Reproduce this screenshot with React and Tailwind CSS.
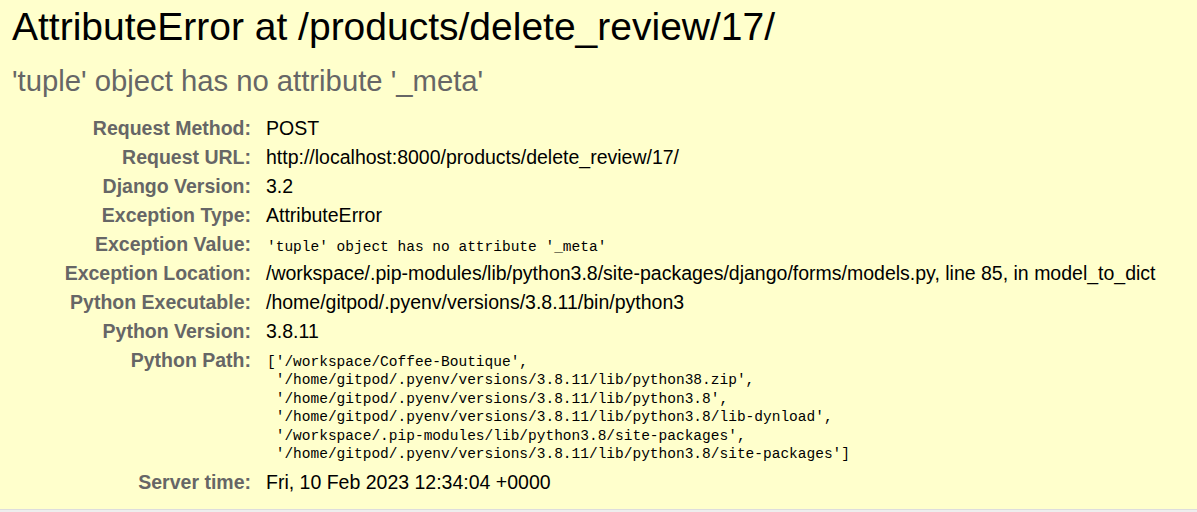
import React from 'react';

const rows = [
  { label: 'Request Method:', value: 'POST' },
  { label: 'Request URL:', value: 'http://localhost:8000/products/delete_review/17/' },
  { label: 'Django Version:', value: '3.2' },
  { label: 'Exception Type:', value: 'AttributeError' },
  { label: 'Exception Value:', value: "'tuple' object has no attribute '_meta'", mono: true },
  {
    label: 'Exception Location:',
    value: '/workspace/.pip-modules/lib/python3.8/site-packages/django/forms/models.py, line 85, in model_to_dict',
  },
  { label: 'Python Executable:', value: '/home/gitpod/.pyenv/versions/3.8.11/bin/python3' },
  { label: 'Python Version:', value: '3.8.11' },
];

const pythonPath = [
  "['/workspace/Coffee-Boutique',",
  " '/home/gitpod/.pyenv/versions/3.8.11/lib/python38.zip',",
  " '/home/gitpod/.pyenv/versions/3.8.11/lib/python3.8',",
  " '/home/gitpod/.pyenv/versions/3.8.11/lib/python3.8/lib-dynload',",
  " '/workspace/.pip-modules/lib/python3.8/site-packages',",
  " '/home/gitpod/.pyenv/versions/3.8.11/lib/python3.8/site-packages']",
];

const sans = 'font-["Liberation_Sans",Arial,sans-serif]';
const mono = 'font-["Liberation_Mono","DejaVu_Sans_Mono",monospace]';

function Row({ label, children, tall }) {
  return (
    <div className={`flex ${tall ? '' : 'h-[29px]'} items-start`}>
      <div className="w-[239px] shrink-0 pt-[3px] text-right text-[19.5px] leading-[22px] font-bold text-[#666]">
        {label}
      </div>
      <div className="pl-[15px] pt-[3px] text-[19.5px] leading-[22px] text-black">{children}</div>
    </div>
  );
}

export default function App() {
  return (
    <div className={`min-h-[512px] bg-[#eee] ${sans}`}>
      {/* Summary */}
      <div className="h-[510px] bg-[#ffc] border-b border-[#ddd] pl-[12px] pt-[4px]">
        <h1 className="text-[39px] leading-[45px] font-normal text-black">
          AttributeError at /products/delete_review/17/
        </h1>
        <h2 className="mt-[16px] text-[29.25px] leading-[33px] font-normal text-[#666]">
          'tuple' object has no attribute '_meta'
        </h2>

        <div className="mt-[16px] flex flex-col">
          {rows.map((row) => (
            <Row key={row.label} label={row.label}>
              {row.mono ? (
                <span className={`${mono} text-[14.5px] pl-[1px]`}>{row.value}</span>
              ) : (
                row.value
              )}
            </Row>
          ))}
          <Row label="Python Path:" tall>
            <pre className={`${mono} text-[14.5px] leading-[18.4px] pl-[1px] pt-[4px] whitespace-pre`}>
              {pythonPath.join('\n')}
            </pre>
          </Row>
          <div className="mt-[5px]">
            <Row label="Server time:">Fri, 10 Feb 2023 12:34:04 +0000</Row>
          </div>
        </div>
      </div>
    </div>
  );
}
